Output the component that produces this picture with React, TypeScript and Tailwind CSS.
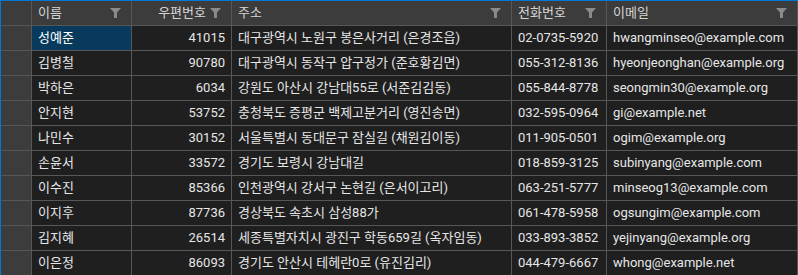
const rows = [
  ["성예준", "41015", "대구광역시 노원구 봉은사거리 (은경조읍)", "02-0735-5920", "hwangminseo@example.com"],
  ["김병철", "90780", "대구광역시 동작구 압구정가 (준호황김면)", "055-312-8136", "hyeonjeonghan@example.org"],
  ["박하은", "6034", "강원도 아산시 강남대55로 (서준김김동)", "055-844-8778", "seongmin30@example.org"],
  ["안지현", "53752", "충청북도 증평군 백제고분거리 (영진송면)", "032-595-0964", "gi@example.net"],
  ["나민수", "30152", "서울특별시 동대문구 잠실길 (채원김이동)", "011-905-0501", "ogim@example.org"],
  ["손윤서", "33572", "경기도 보령시 강남대길", "018-859-3125", "subinyang@example.com"],
  ["이수진", "85366", "인천광역시 강서구 논현길 (은서이고리)", "063-251-5777", "minseog13@example.com"],
  ["이지후", "87736", "경상북도 속초시 삼성88가", "061-478-5958", "ogsungim@example.com"],
  ["김지혜", "26514", "세종특별자치시 광진구 학동659길 (옥자임동)", "033-893-3852", "yejinyang@example.org"],
  ["이은정", "86093", "경기도 안산시 테헤란0로 (유진김리)", "044-479-6667", "whong@example.net"],
];

const headers = ["이름", "우편번호", "주소", "전화번호", "이메일"];

function Funnel() {
  return (
    <svg width="11" height="10" viewBox="0 0 11 10" className="shrink-0">
      <path d="M0 0H11L7 4.5V10H4V4.5Z" fill="#8a8a8a" />
    </svg>
  );
}

export default function App() {
  return (
    <div
      className="w-[798px] h-[275px] overflow-hidden bg-[#1f1f1f] border-t border-l border-[#0078d4] text-[13px] text-[#e6e6e6]"
      style={{ fontFamily: 'Roboto, "Noto Sans CJK KR", sans-serif' }}
    >
      <div className="grid grid-cols-[31px_100px_100px_280px_95px_191px]">
        <div className="h-[25px] bg-[#3c3c3c] border-r border-b border-[#575757]" />
        {headers.map((h, i) => (
          <div
            key={h}
            className={`h-[25px] bg-[#3c3c3c] border-r border-b border-[#575757] flex items-center gap-1 pl-[6px] pr-[10px] text-[#d4d4d4] ${i === 1 ? "justify-end" : "justify-between"}`}
          >
            <span>{h}</span>
            <Funnel />
          </div>
        ))}
        {rows.map((r, ri) => (
          <div key={ri} className="contents">
            <div className="h-[25px] bg-[#3c3c3c] border-r border-b border-[#575757]" />
            {r.map((c, ci) => (
              <div
                key={ci}
                className={`h-[25px] border-r border-b border-[#575757] flex items-center px-[6px] whitespace-nowrap overflow-hidden ${ci === 1 ? "justify-end" : ""} ${ri === 0 && ci === 0 ? "bg-[#073a5c] text-white" : ""}`}
              >
                {c}
              </div>
            ))}
          </div>
        ))}
      </div>
    </div>
  );
}
